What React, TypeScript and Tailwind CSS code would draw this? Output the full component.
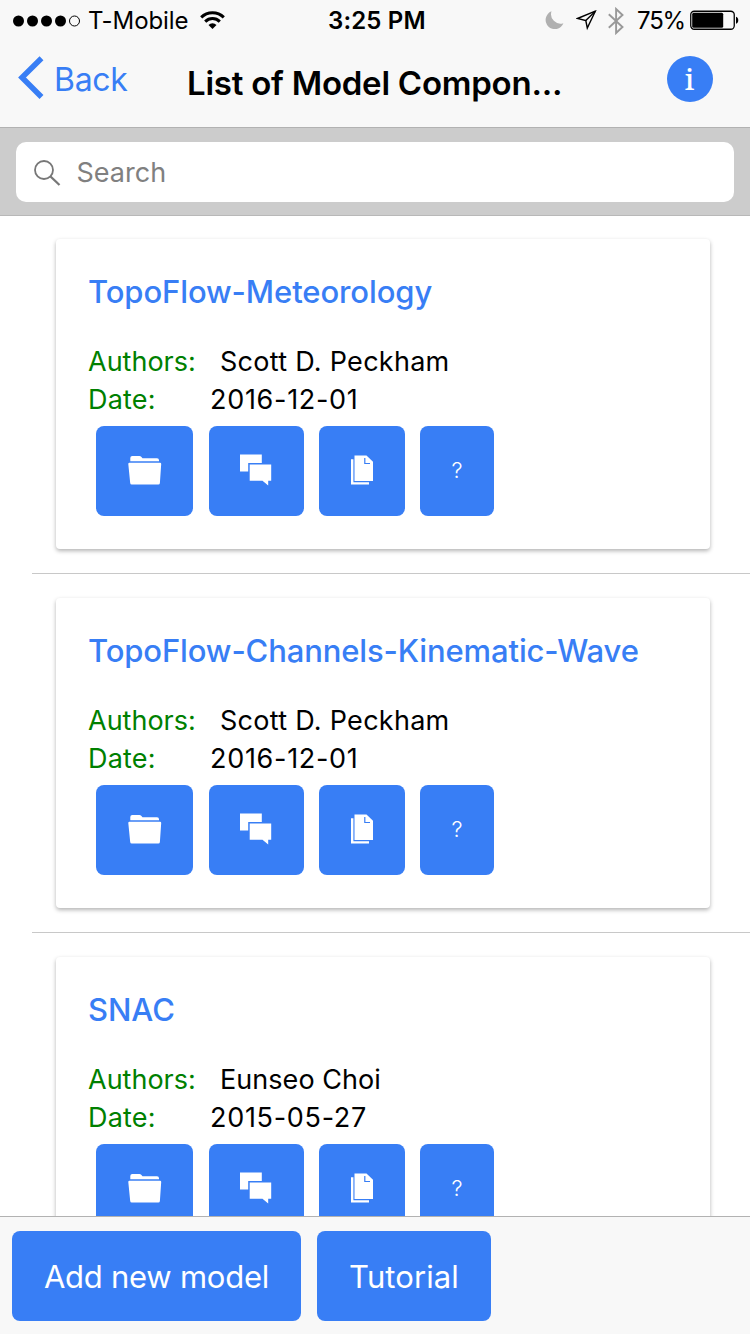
import React from "react";

type Model = { title: string; titleClass: string; author: string; authorClass: string; date: string };

const models: Model[] = [
  { title: "TopoFlow-Meteorology", titleClass: "tracking-[-0.1px]", author: "Scott D. Peckham", authorClass: "tracking-[0.28px]", date: "2016-12-01" },
  { title: "TopoFlow-Channels-Kinematic-Wave", titleClass: "tracking-[-0.13px]", author: "Scott D. Peckham", authorClass: "tracking-[0.28px]", date: "2016-12-01" },
  { title: "SNAC", titleClass: "tracking-[-0.05px]", author: "Eunseo Choi", authorClass: "tracking-[0.05px]", date: "2015-05-27" },
];

function StatusBar() {
  return (
    <div className="flex h-10 items-center text-[24px] leading-10 text-black">
      <svg className="ml-[13px] mt-px h-3 w-[67px] shrink-0" viewBox="0 0 67 12">
        <circle cx="5.5" cy="6" r="5.5" />
        <circle cx="19.5" cy="6" r="5.5" />
        <circle cx="33.5" cy="6" r="5.5" />
        <circle cx="47.5" cy="6" r="5.5" />
        <circle cx="61.5" cy="6" r="5" fill="none" stroke="#000" />
      </svg>
      <span className="ml-[8px] mt-0.5 w-[113px] whitespace-nowrap tracking-[-0.1px]">T-Mobile</span>
      <svg className="-ml-px h-[18px] w-[25px] shrink-0" viewBox="0 0 25 18" fill="none" stroke="#000" strokeWidth="3">
        <path d="M1.200 6.400a16 16 0 0 1 22.600 0" />
        <path d="M5.200 10.600a10.400 10.400 0 0 1 14.600 0" />
        <path d="M12.500 18l-4-4.100a5.800 5.800 0 0 1 8 0z" fill="#000" stroke="none" />
      </svg>
      <span className="ml-[103px] mt-0.5 w-[100px] whitespace-nowrap font-semibold tracking-[0.15px]">3:25 PM</span>
      <svg className="ml-[117px] h-[19px] w-[19px] shrink-0" viewBox="0 0 19 19" fill="#b0b0b0">
        <path d="M6.500 .3A9.200 9.200 0 1 0 18.400 12.200A9.500 9.500 0 0 1 6.500 .3z" />
      </svg>
      <svg className="ml-3 h-[21px] w-[21px] shrink-0" viewBox="0 0 21 21" fill="none" stroke="#000" strokeWidth="1.400">
        <path d="M19.300 1.200L1.500 8.500l8.300 2L11.300 18z" />
        <path d="M19.300 1.200L9.800 10.500" />
      </svg>
      <svg className="ml-[11px] mt-px h-7 w-4 shrink-0" viewBox="0 0 16 28" fill="none" stroke="#999" strokeWidth="1.900">
        <path d="M.8 7.200L14.500 20 8.100 26V2l6.400 6L.8 20.800" />
      </svg>
      <span className="ml-[13px] mt-0.5 w-[53px] whitespace-nowrap tracking-[-1.2px]">75%</span>
      <svg className="h-5 w-[50px] shrink-0" viewBox="0 0 50 20">
        <rect x=".75" y="1.250" width="43.500" height="18" rx="3.500" fill="none" stroke="#000" strokeWidth="1.300" />
        <rect x="2.200" y="2.700" width="31" height="15" rx="1.500" />
        <path d="M46 6.700c3 .8 3 6.200 0 7z" />
      </svg>
    </div>
  );
}

function FolderIcon() {
  return (
    <svg className="-mt-[3px] h-[30px] w-[34px]" viewBox="0 0 34 30" fill="#fff">
      <path d="M2.300 6.300V3Q2.300 1 4.300 1H11.500Q12.500 1 13.200 1.800L14.500 3.200H29Q31 3.200 31 5.200V6.300z" />
      <path d="M1.500 7.800H32Q33.300 7.800 33.200 9L31.900 28Q31.800 29.500 30.300 29.500H3.800Q2.300 29.500 2.200 28L.3 9Q.2 7.800 1.500 7.800z" />
    </svg>
  );
}

function ChatIcon() {
  return (
    <svg className="-mt-[3px] mr-[2px] h-8 w-8" viewBox="0 0 32 32" fill="#fff">
      <path d="M0 .5H21.800V9H8.200V17.500H0z" />
      <path d="M9.700 10.500H31.200V26.800H28.200V31.600L22.500 26.800H9.700z" />
    </svg>
  );
}

function CopyIcon() {
  return (
    <svg className="-mt-[3px] h-[30px] w-[22px]" viewBox="0 0 22 30" fill="#fff">
      <path d="M0 4.300H2.400V27.300H18V29.500H0z" />
      <path d="M3.500 .5H15.500L22 6.700V25.900H3.500z" />
      <path d="M13.800 3V8.500H19" fill="none" stroke="#387ef5" strokeWidth="1.200" />
    </svg>
  );
}

function ModelRow({ model, last }: { model: Model; last: boolean }) {
  return (
    <li className="shrink-0">
      <article className="ml-14 mt-6 h-[310px] w-[654px] rounded-[4px] bg-white pl-8 pt-8 shadow-[0_2px_4px_rgba(0,0,0,0.3)]">
        <h2 className={"h-[42px] whitespace-nowrap text-[31px] font-medium leading-[42px] text-[#387ef5] " + model.titleClass}>{model.title}</h2>
        <dl className="mt-[30px] grid grid-cols-[122px_1fr] text-[27px] leading-[38px]">
          <dt className="text-[#008000]">Authors:</dt>
          <dd className={"pl-[10px] text-black " + model.authorClass}>{model.author}</dd>
          <dt className="tracking-[0.2px] text-[#008000]">Date:</dt>
          <dd className="tracking-[0.7px] text-black">{model.date}</dd>
        </dl>
        <div className="ml-2 mt-[7px] flex">
          <button className="flex h-[90px] w-[97px] items-center justify-center rounded-lg bg-[#387ef5]"><FolderIcon /></button>
          <button className="ml-4 flex h-[90px] w-[95px] items-center justify-center rounded-lg bg-[#387ef5]"><ChatIcon /></button>
          <button className="ml-[15px] flex h-[90px] w-[86px] items-center justify-center rounded-lg bg-[#387ef5]"><CopyIcon /></button>
          <button className="ml-[15px] flex h-[90px] w-[74px] items-center justify-center rounded-lg bg-[#387ef5] pb-px text-[22px] font-light text-white">?</button>
        </div>
      </article>
      {!last && <div className="ml-8 mt-6 h-px bg-[#c8c8c8]" />}
    </li>
  );
}

export default function App() {
  return (
    <div className="flex h-[1334px] w-[750px] flex-col overflow-hidden bg-white font-['Inter','Liberation_Sans',sans-serif]">
      <header className="h-32 shrink-0 border-b border-[#b2b2b2] bg-[#f8f8f8]">
        <StatusBar />
        <div className="flex h-[87px] items-start">
          <svg className="ml-[18px] mt-4 h-[43px] w-[26px] shrink-0" viewBox="0 0 26 43" fill="none" stroke="#387ef5" strokeWidth="5.500">
            <path d="M23.500 2.200L4 21.500 23.500 41" />
          </svg>
          <span className="ml-[10px] mt-5 w-[133px] whitespace-nowrap text-[32px] leading-10 tracking-[-0.3px] text-[#387ef5]">Back</span>
          <h1 className="mt-[23px] w-[480px] whitespace-nowrap text-[33px] font-semibold leading-10 tracking-[-0.24px] text-black">List of Model Compon...</h1>
          <button className="mt-4 flex h-[46px] w-[46px] shrink-0 items-center justify-center rounded-full bg-[#387ef5] pr-px font-['Noto_Serif','Liberation_Serif',serif] text-[32px] font-medium text-white"><span className="text-[29px]">i</span></button>
        </div>
      </header>
      <section className="h-22 shrink-0 border-b border-[#b8b8b8] bg-[#ccc] px-4 pt-[14px]">
        <div className="flex h-[60px] items-center rounded-[10px] bg-white pl-[18px] text-[27px] text-[#808080]">
          <svg className="mt-0.5 h-[26px] w-[27px]" viewBox="0 0 27 26" fill="none" stroke="#777" strokeWidth="1.800">
            <circle cx="10" cy="10" r="9" />
            <path d="M16.500 16.500L25.500 25" strokeWidth="2.300" />
          </svg>
          <span className="ml-[15.5px] mt-0.5">Search</span>
        </div>
      </section>
      <ul className="-mt-px flex min-h-0 flex-1 flex-col overflow-hidden">
        {models.map((m, i) => <ModelRow key={m.title} model={m} last={i === models.length - 1} />)}
      </ul>
      <footer className="flex h-[118px] shrink-0 border-t border-[#b2b2b2] bg-[#f8f8f8] pl-3 pt-[14px] text-[31px] text-white">
        <button className="h-[90px] w-[289px] whitespace-nowrap rounded-lg bg-[#387ef5] pt-0.5 tracking-[-0.25px]">Add new model</button>
        <button className="ml-4 h-[90px] w-[174px] whitespace-nowrap rounded-lg bg-[#387ef5] pt-0.5 tracking-[0.1px]">Tutorial</button>
      </footer>
    </div>
  );
}
